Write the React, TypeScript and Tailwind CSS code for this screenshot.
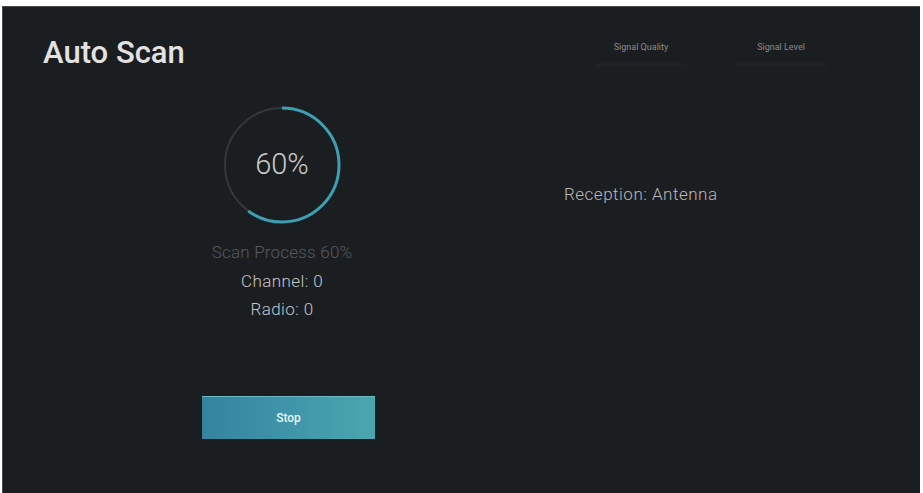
import React from "react";

const font = { fontFamily: "Roboto, 'Noto Sans', sans-serif" };

function ProgressRing({ value }: { value: number }) {
  const r = 57;
  const c = 2 * Math.PI * r;
  return (
    <div className="relative w-[120px] h-[120px]">
      <svg width="120" height="120" viewBox="0 0 120 120" className="-rotate-90">
        <circle cx="60" cy="60" r={r} fill="none" stroke="#34373b" strokeWidth="2" />
        <circle
          cx="60"
          cy="60"
          r={r}
          fill="none"
          stroke="#3c9fb2"
          strokeWidth="3"
          strokeDasharray={`${(c * value) / 100} ${c}`}
        />
      </svg>
      <div className="absolute inset-0 flex items-center justify-center text-[29px] font-light text-[#c9c9c9]">
        {value}%
      </div>
    </div>
  );
}

export default function App() {
  return (
    <div className="w-[923px] h-[493px] bg-white pt-[6px] pl-[2px] pr-[3px]" style={font}>
      <div className="h-full bg-[#1b1e21] border-l border-t border-[#4a4a4a] flex flex-col">
        {/* Header */}
        <div className="h-[98px] flex">
          <div className="flex-1 pl-[40px] pt-[29px]">
            <h1 className="text-[31px] leading-[34px] font-medium text-[#e2e2e2]">Auto Scan</h1>
          </div>
          <div className="flex gap-[40px] mr-[89px] pt-[34px]">
            <div className="w-[100px] flex flex-col items-center">
              <span className="text-[9px] leading-[12px] text-[#8a8a8a]">Signal Quality</span>
              <div className="mt-[10px] w-[90px] h-[4px] bg-[#1f2225]" />
            </div>
            <div className="w-[100px] flex flex-col items-center">
              <span className="text-[9px] leading-[12px] text-[#8a8a8a]">Signal Level</span>
              <div className="mt-[10px] w-[90px] h-[4px] bg-[#1f2225]" />
            </div>
          </div>
        </div>

        {/* Body */}
        <div className="flex">
          <div className="w-[558px] flex flex-col items-center">
            <ProgressRing value={60} />
            <p className="mt-[17px] text-[17px] leading-[20px] font-light tracking-[0.2px] text-[#565b5f]">
              Scan Process 60%
            </p>
            <p className="mt-[9px] text-[17px] leading-[20px] font-light tracking-[0.4px] text-[#c5c5c5]">
              Channel: 0
            </p>
            <p className="mt-[8px] text-[17px] leading-[20px] font-light tracking-[0.4px] text-[#c5c5c5]">
              Radio: 0
            </p>
            <button className="mt-[77px] ml-[13px] w-[173px] h-[43px] bg-gradient-to-r from-[#3583a0] to-[#4aa7b0] border-t border-[#6fb9c6] text-[12px] font-medium text-[#e8f2f4]">
              Stop
            </button>
          </div>
          <div className="pl-[3px] pt-[79px]">
            <p className="text-[17px] leading-[20px] font-light tracking-[0.5px] text-[#b8b8b8]">
              Reception: Antenna
            </p>
          </div>
        </div>
      </div>
    </div>
  );
}
